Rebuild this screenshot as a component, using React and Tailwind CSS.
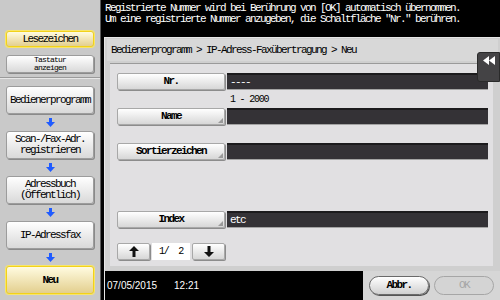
import React from 'react';

const mono = "font-['Liberation_Mono','DejaVu_Sans_Mono',monospace]";

const DownArrow = () => (
  <svg width="9" height="9" viewBox="0 0 9 9">
    <rect x="3" y="0" width="3" height="4" fill="#1f5bff" />
    <polygon points="0,4 9,4 4.5,9" fill="#1f5bff" />
  </svg>
);

const SideButton = ({ children, active, className = '' }) => (
  <div
    className={`mx-[6px] flex items-center justify-center rounded-[3px] border text-center leading-[11px] ${mono} text-[11px] tracking-[-1.6px] text-black ${
      active
        ? 'border-[#f2d21a] bg-gradient-to-b from-[#fffbe0] to-[#e3cf8e] shadow-[0_0_0_1px_#f7e56a]'
        : 'border-[#9c9c9c] bg-gradient-to-b from-[#ffffff] to-[#d9d9d9] shadow-[1px_1px_0_#8a8a8a]'
    } ${className}`}
  >
    {children}
  </div>
);

const Spacer = () => (
  <div className="flex h-[17px] items-center justify-center">
    <DownArrow />
  </div>
);

const FieldButton = ({ children, corner }) => (
  <div className="relative flex h-[17px] w-[108px] items-center justify-center rounded-[2px] border border-[#a8a8a8] bg-gradient-to-b from-[#ffffff] to-[#d7d7d7] shadow-[1px_1px_0_#8c8c8c]">
    <span className={`${mono} text-[11px] font-bold tracking-[-1.6px] text-black`}>{children}</span>
    {corner && (
      <span className="absolute bottom-[1px] right-[1px] h-0 w-0 border-b-[5px] border-l-[5px] border-b-[#9a9a9a] border-l-transparent" />
    )}
  </div>
);

const Field = ({ children }) => (
  <div className={`flex h-[17px] flex-1 items-center border-t-2 border-b border-t-[#1c1b1d] border-b-[#a3a3a3] bg-[#343236] pl-[3px] ${mono} text-[11px] tracking-[-1.6px] text-white`}>
    {children}
  </div>
);

const Row = ({ label, corner, value }) => (
  <div className="flex items-center gap-[2px]">
    <FieldButton corner={corner}>{label}</FieldButton>
    <Field>{value}</Field>
  </div>
);

const NavButton = ({ children }) => (
  <div className="flex h-[17px] w-[33px] items-center justify-center rounded-[2px] border border-[#a8a8a8] bg-gradient-to-b from-[#ffffff] to-[#d7d7d7] shadow-[1px_1px_0_#8c8c8c]">
    {children}
  </div>
);

export default function App() {
  return (
    <div className="flex h-[300px] w-[500px] overflow-hidden bg-black">
      {/* Sidebar */}
      <div className="flex w-[100px] flex-col bg-[#c9c9c9]">
        <div className="h-[31px]" />
        <SideButton active className="h-[16px]">Lesezeichen</SideButton>
        <div className="h-[8px]" />
        <SideButton className="h-[18px] !text-[8px] !leading-[8px] !tracking-[-0.8px]">
          Tastatur
          <br />
          anzeigen
        </SideButton>
        <div className="mt-[4px] h-[2px] border-t border-b border-t-[#9a9a9a] border-b-[#e6e6e6]" />
        <div className="h-[7px]" />
        <SideButton className="h-[28px]">Bedienerprogramm</SideButton>
        <Spacer />
        <SideButton className="h-[28px]">
          Scan-/Fax-Adr.
          <br />
          registrieren
        </SideButton>
        <Spacer />
        <SideButton className="h-[28px]">
          Adressbuch
          <br />
          (Öffentlich)
        </SideButton>
        <Spacer />
        <SideButton className="h-[28px]">IP-Adressfax</SideButton>
        <Spacer />
        <SideButton active className="h-[28px] font-bold">Neu</SideButton>
      </div>

      {/* Main */}
      <div className="flex flex-1 flex-col border-l border-[#5a5a5a]">
        <div className={`h-[37px] pl-[4px] pt-[3px] ${mono} text-[11px] leading-[11px] tracking-[-1.6px] text-white`}>
          <p>Registrierte Nummer wird bei Berührung von [OK] automatisch übernommen.</p>
          <p>Um eine registrierte Nummer anzugeben, die Schaltfläche "Nr." berühren.</p>
        </div>

        <div className="relative ml-[3px] flex flex-1 flex-col border-l border-t border-[#e6e6e6] bg-[#cfcfcf]">
          <div className={`mx-[2px] mt-[1px] flex h-[22px] items-center bg-[#d8d8d8] px-[4px] ${mono} text-[11px] tracking-[-1.6px] text-black`}>
            Bedienerprogramm &gt; IP-Adress-Faxübertragung &gt; Neu
          </div>

          <div className="ml-[5px] mr-[7px] mt-[2px] flex h-[203px] flex-col border-t border-[#9a9a9a] bg-[#e1e0e2] pl-[7px] pr-[5px] pt-[9px]">
            <Row label="Nr." value="----" />
            <div className={`ml-[113px] h-[18px] pt-[2px] ${mono} text-[10px] tracking-[-1.2px] text-black`}>1 - 2000</div>
            <Row label="Name" corner />
            <div className="h-[18px]" />
            <Row label="Sortierzeichen" corner />
            <div className="h-[51px]" />
            <Row label="Index" corner value="etc" />
            <div className="mt-[15px] flex items-center gap-[2px]">
              <NavButton>
                <svg width="10" height="11" viewBox="0 0 10 11">
                  <polygon points="5,0 10,5 6.5,5 6.5,11 3.5,11 3.5,5 0,5" fill="#111" />
                </svg>
              </NavButton>
              <div className={`flex h-[17px] w-[38px] items-center justify-center bg-white ${mono} text-[10px] tracking-[-1.2px] text-black`}>
                1/&nbsp;&nbsp;2
              </div>
              <NavButton>
                <svg width="10" height="11" viewBox="0 0 10 11">
                  <polygon points="5,11 10,6 6.5,6 6.5,0 3.5,0 3.5,6 0,6" fill="#111" />
                </svg>
              </NavButton>
            </div>
          </div>

          {/* bottom row */}
          <div className="mt-[5px] flex flex-1">
            <div className="flex w-[258px] items-end bg-black pb-[7px] pl-[2px] font-['Liberation_Sans',Arial,sans-serif] text-[10px] text-white">
              <span>07/05/2015</span>
              <span className="ml-[17px]">12:21</span>
            </div>
            <div className="flex flex-1 items-center gap-[5px] bg-[#d6d6d6] pl-[6px]">
              <div className={`flex h-[19px] w-[60px] items-center justify-center rounded-full border border-[#6a6a6a] bg-gradient-to-b from-[#ffffff] to-[#d0d0d0] shadow-[1px_1px_0_#555] ${mono} text-[11px] font-bold tracking-[-1.6px] text-black`}>
                Abbr.
              </div>
              <div className={`flex h-[19px] w-[60px] items-center justify-center rounded-full border border-[#a6a6a6] bg-[#d4d4d4] ${mono} text-[11px] tracking-[-1.6px] text-[#a6a6a6]`}>
                OK
              </div>
            </div>
          </div>

          {/* collapse tab */}
          <div className="absolute right-0 top-[14px] flex h-[30px] w-[23px] items-start justify-center rounded-l-[3px] border border-[#2a2a2a] bg-[#444345] pt-[3px]">
            <svg width="12" height="9" viewBox="0 0 12 9">
              <polygon points="0,4.5 6,0 6,9" fill="#fff" />
              <polygon points="6,4.5 12,0 12,9" fill="#fff" />
            </svg>
          </div>
        </div>
      </div>
    </div>
  );
}
